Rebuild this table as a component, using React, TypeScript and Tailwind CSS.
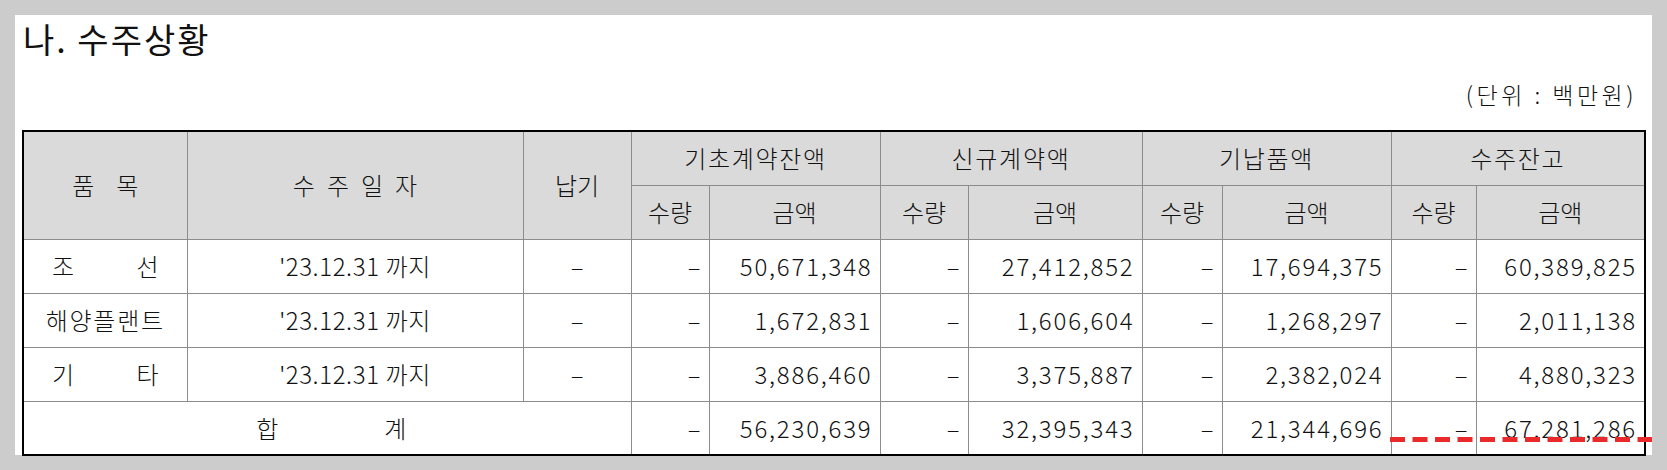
import React from "react";

const F = "font-['Noto_Sans_CJK_KR','Noto_Sans_CJK_SC',sans-serif]";

const th = "border border-[#8c8c8c] bg-[#dadada] h-[54px] p-0 font-light text-[24px] leading-none text-[#111] align-middle";
const td = "border border-[#8c8c8c] h-[54px] p-0 font-light text-[24px] leading-none text-[#111] align-middle";

type Row = {
  name: React.ReactNode;
  date: string | null;
  vals: string[];
};

const num = "text-right pr-[7px] tracking-[1.8px]";
const dash = "text-right pr-[8px]";

function Spread({ a, b }: { a: string; b: string }) {
  return (
    <div className="flex justify-between px-[28px]">
      <span>{a}</span>
      <span>{b}</span>
    </div>
  );
}

const rows: Row[] = [
  {
    name: <Spread a="조" b="선" />,
    date: "'23.12.31 까지",
    vals: ["50,671,348", "27,412,852", "17,694,375", "60,389,825"],
  },
  {
    name: <div className="text-center tracking-[1.7px]">해양플랜트</div>,
    date: "'23.12.31 까지",
    vals: ["1,672,831", "1,606,604", "1,268,297", "2,011,138"],
  },
  {
    name: <Spread a="기" b="타" />,
    date: "'23.12.31 까지",
    vals: ["3,886,460", "3,375,887", "2,382,024", "4,880,323"],
  },
];

export default function App() {
  return (
    <div className={`min-h-[470px] w-full bg-[#cccccc] pt-[15px] pl-[15px] ${F}`}>
      <div className="relative w-[1637px] h-[440px] bg-white px-[7px] pt-[7px]">
        <div className="pl-[1px] text-[34px] leading-none tracking-[2px] text-[#111]">나. 수주상황</div>
        <div className="mt-[27px] flex justify-end pr-[8px] text-[23px] font-light leading-none tracking-[3.5px] text-[#111]">
          (단위 : 백만원)
        </div>
        <table className="mt-[24px] w-[1622px] table-fixed border-collapse border-2 border-black">
          <colgroup>
            <col className="w-[164px]" />
            <col className="w-[336px]" />
            <col className="w-[108px]" />
            <col className="w-[78px]" />
            <col className="w-[171px]" />
            <col className="w-[88px]" />
            <col className="w-[174px]" />
            <col className="w-[80px]" />
            <col className="w-[169px]" />
            <col className="w-[85px]" />
            <col className="w-[169px]" />
          </colgroup>
          <thead>
            <tr>
              <th rowSpan={2} className={th}>
                <div className="flex justify-center gap-[22px]">
                  <span>품</span>
                  <span>목</span>
                </div>
              </th>
              <th rowSpan={2} className={th}>
                <div className="flex justify-center gap-[12px]">
                  <span>수</span>
                  <span>주</span>
                  <span>일</span>
                  <span>자</span>
                </div>
              </th>
              <th rowSpan={2} className={th}>납기</th>
              <th colSpan={2} className={`${th} tracking-[1.7px]`}>기초계약잔액</th>
              <th colSpan={2} className={`${th} tracking-[1.7px]`}>신규계약액</th>
              <th colSpan={2} className={`${th} tracking-[1.7px]`}>기납품액</th>
              <th colSpan={2} className={`${th} tracking-[1.7px]`}>수주잔고</th>
            </tr>
            <tr>
              <th className={th}>수량</th>
              <th className={th}>금액</th>
              <th className={th}>수량</th>
              <th className={th}>금액</th>
              <th className={th}>수량</th>
              <th className={th}>금액</th>
              <th className={th}>수량</th>
              <th className={th}>금액</th>
            </tr>
          </thead>
          <tbody>
            {rows.map((r, i) => (
              <tr key={i}>
                <td className={td}>{r.name}</td>
                <td className={`${td} text-center tracking-[0.6px]`}>{r.date}</td>
                <td className={`${td} text-center`}>–</td>
                <td className={`${td} ${dash}`}>–</td>
                <td className={`${td} ${num}`}>{r.vals[0]}</td>
                <td className={`${td} ${dash}`}>–</td>
                <td className={`${td} ${num}`}>{r.vals[1]}</td>
                <td className={`${td} ${dash}`}>–</td>
                <td className={`${td} ${num}`}>{r.vals[2]}</td>
                <td className={`${td} ${dash}`}>–</td>
                <td className={`${td} ${num}`}>{r.vals[3]}</td>
              </tr>
            ))}
            <tr>
              <td colSpan={3} className={td}>
                <div className="flex justify-center gap-[106px] pl-[8px]">
                  <span>합</span>
                  <span>계</span>
                </div>
              </td>
              <td className={`${td} ${dash}`}>–</td>
              <td className={`${td} ${num}`}>56,230,639</td>
              <td className={`${td} ${dash}`}>–</td>
              <td className={`${td} ${num}`}>32,395,343</td>
              <td className={`${td} ${dash}`}>–</td>
              <td className={`${td} ${num}`}>21,344,696</td>
              <td className={`${td} ${dash}`}>–</td>
              <td className={`${td} ${num}`}>67,281,286</td>
            </tr>
          </tbody>
        </table>
        <svg
          className="absolute left-[1375px] top-[422px]"
          width="262"
          height="5"
          viewBox="0 0 262 5"
        >
          <line x1="0" y1="2.5" x2="262" y2="2.5" stroke="#ea2a2a" strokeWidth="5" strokeDasharray="15 7.5" />
        </svg>
      </div>
    </div>
  );
}
